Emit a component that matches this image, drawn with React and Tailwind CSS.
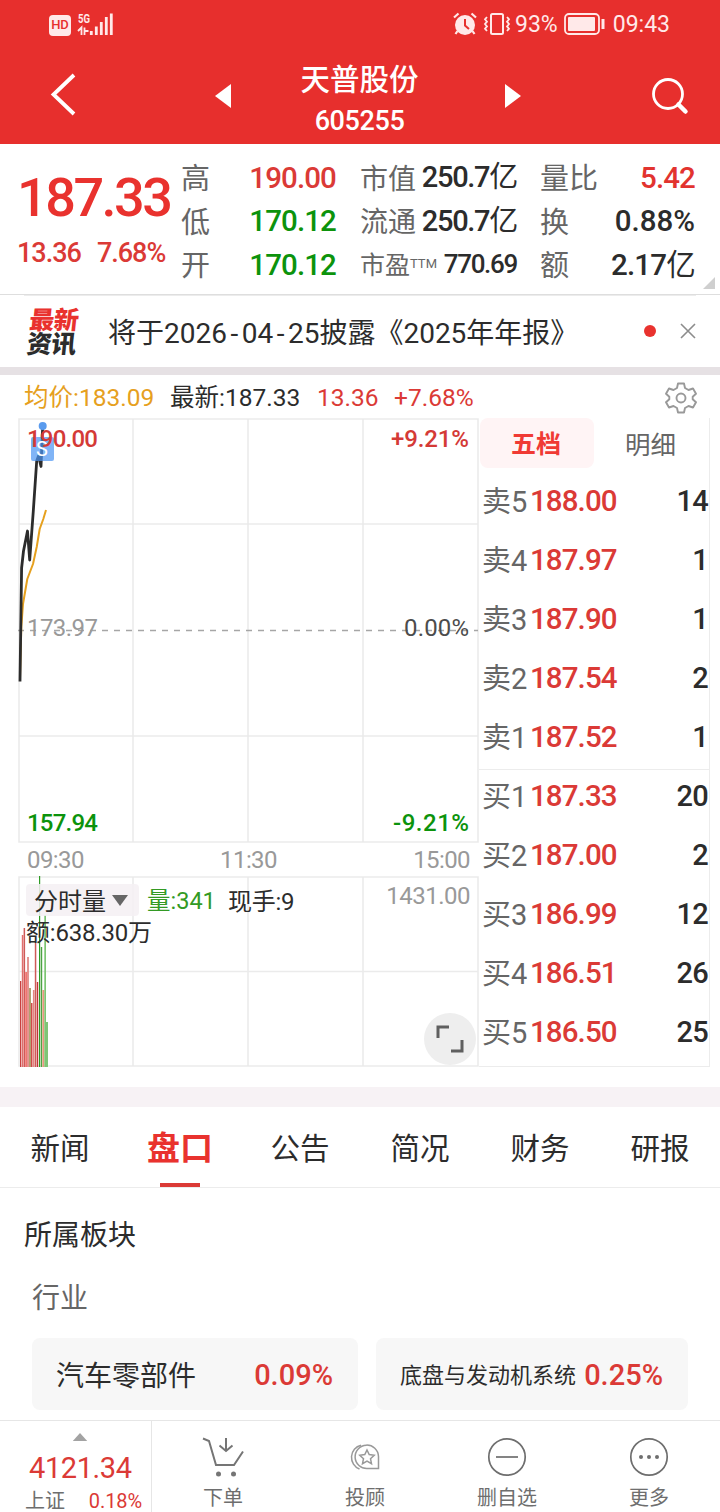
import React from "react";

const quoteLeft = [
  { label: "高", value: "190.00", color: "text-[#db3a36]" },
  { label: "低", value: "170.12", color: "text-[#0c930c]" },
  { label: "开", value: "170.12", color: "text-[#0c930c]" },
];

const quoteMiddle = [
  { label: "市值", value: "250.7", unit: "亿" },
  { label: "流通", value: "250.7", unit: "亿" },
];

const quoteRight = [
  { label: "量比", value: "5.42", unit: "", color: "text-[#e2332f] tracking-[-0.9px]" },
  { label: "换", value: "0.88%", unit: "", color: "text-[#2c2c2c]" },
  { label: "额", value: "2.17", unit: "亿", color: "text-[#2c2c2c] tracking-[-0.8px]" },
];

const sellOrders = [
  { name: "卖", level: 5, price: "188.00", count: 14 },
  { name: "卖", level: 4, price: "187.97", count: 1 },
  { name: "卖", level: 3, price: "187.90", count: 1 },
  { name: "卖", level: 2, price: "187.54", count: 2 },
  { name: "卖", level: 1, price: "187.52", count: 1 },
];

const buyOrders = [
  { name: "买", level: 1, price: "187.33", count: 20 },
  { name: "买", level: 2, price: "187.00", count: 2 },
  { name: "买", level: 3, price: "186.99", count: 12 },
  { name: "买", level: 4, price: "186.51", count: 26 },
  { name: "买", level: 5, price: "186.50", count: 25 },
];

const tabs = ["新闻", "盘口", "公告", "简况", "财务", "研报"];

// x, top, width, color
const volumeBars = [
  [2, 105, 1.3, "#c9403f"],
  [3.8, 59, 1.5, "#e06f6d"],
  [5.6, 52, 1.5, "#cf5a58"],
  [7.2, 96, 2, "#f07572"],
  [9.1, 81, 1.8, "#e28a87"],
  [11, 112, 2, "#b3a070"],
  [13, 127, 1.5, "#cf4a48"],
  [14.9, 114, 1.6, "#e48480"],
  [16.8, 67, 1.5, "#cf5a58"],
  [18.8, 106, 1.4, "#c03635"],
  [21, 0, 1.2, "#2e9a24"],
  [22.8, 71, 1.4, "#4da343"],
  [24.4, 114, 1.8, "#e8957e"],
  [26.3, 39, 1.7, "#7cc573"],
  [28, 146, 2, "#80c477"],
];

const StatusBar = () => (
  <div className="flex h-12 items-center pr-[50px] pl-[49px] text-[#ffe9e9]">
    <div className="mt-[2px] flex h-[21px] w-[22px] items-center justify-center rounded-[4px] bg-[#ffe9e9]">
      <span className="text-[13px] font-medium text-[#e72f2d]">HD</span>
    </div>
    <svg className="ml-[6px]" width="37" height="24" viewBox="0 0 37 24">
      <text x="1" y="10.500" fontSize="13" fontWeight="700" fill="#ffe9e9" textLength="12" lengthAdjust="spacingAndGlyphs">
        5G
      </text>
      <path d="M1 19 4.500 15.500V23M7.500 15.500V23M7.500 19h4" fill="none" stroke="#ffe9e9" strokeWidth="1.800" />
      <path d="M14.300 19v4M19.300 14.500v8.500M24.300 10v13M29.300 5v18M34.300 1.500V23" stroke="#ffe9e9" strokeWidth="2.800" />
    </svg>
    <div className="ml-auto flex items-center">
      <svg width="24" height="24" viewBox="0 0 24 24">
        <path d="M1 5.500 5.500 1.500M18.500 1.500 23 5.500M4.500 19 2.500 22M19.500 19l2 3" stroke="#ffe9e9" strokeWidth="2.200" />
        <circle cx="12" cy="13" r="10" fill="#ffe9e9" />
        <path d="M12 7v6.500l4 3.500" fill="none" stroke="#e72f2d" strokeWidth="2" />
      </svg>
      <svg className="ml-[6px]" width="28" height="24" viewBox="0 0 28 24">
        <rect x="8" y="2" width="12" height="20" rx="1.500" fill="none" stroke="#ffe9e9" strokeWidth="2" />
        <path d="M4 5 2 7.300l2 2.400-2 2.300 2 2.400-2 2.300 2 2.300M24 5l2 2.300-2 2.400 2 2.300-2 2.400 2 2.300-2 2.300" fill="none" stroke="#ffe9e9" strokeWidth="1.800" />
      </svg>
      <span className="mt-[2px] ml-[4px] text-[23px]">93%</span>
      <svg className="ml-[6px]" width="41" height="22" viewBox="0 0 41 22">
        <rect x="1" y="1" width="34" height="20" rx="4" fill="none" stroke="#ffe9e9" strokeWidth="1.800" />
        <rect x="4" y="4" width="27" height="14" rx="1" fill="#ffe9e9" />
        <path d="M39 6v10" stroke="#ffe9e9" strokeWidth="3" />
      </svg>
      <span className="mt-[2px] ml-[8px] text-[23px]">09:43</span>
    </div>
  </div>
);

const TitleBar = () => (
  <div className="flex h-24 items-center justify-between pr-[30px] pl-[49px] text-white">
    <svg className="mb-[4px]" width="28" height="44" viewBox="0 0 28 44">
      <path d="M25 3 4.500 22.500 25 42" fill="none" stroke="#fff" strokeWidth="3.800" />
    </svg>
    <div className="ml-[9px] flex items-center">
      <svg width="16" height="24" viewBox="0 0 17 24" preserveAspectRatio="none">
        <path d="M17 0v24L0 12z" fill="#fff" />
      </svg>
      <div className="flex w-[274px] flex-col items-center pt-[9px] pr-[17px]">
        <span className="h-[42px] text-[29.5px] leading-[42px] font-medium">天普股份</span>
        <span className="h-[42px] text-[27px] leading-[41px] font-medium tracking-[-0.4px]">605255</span>
      </div>
      <svg width="16" height="24" viewBox="0 0 17 24" preserveAspectRatio="none">
        <path d="M0 0v24l17-12z" fill="#fff" />
      </svg>
    </div>
    <svg width="40" height="40" viewBox="0 0 40 40">
      <circle cx="18" cy="18" r="14.500" fill="none" stroke="#fff" strokeWidth="2.800" />
      <path d="m28.500 28.500 7 7" stroke="#fff" strokeWidth="4.500" strokeLinecap="round" />
    </svg>
  </div>
);

const QuotePanel = () => (
  <div className="relative flex h-[151px] border-b border-[#dedede] pt-[12px]">
    <div className="w-[181px] pl-[17px] font-medium text-[#db3a36]">
      <p className="mt-[12px] h-[60px] text-[54px] leading-[60px] tracking-[-2.5px] text-[#e9322e]">187.33</p>
      <p className="mt-[9px] flex h-[32px] gap-[16px] text-[27px] leading-[32px] tracking-[-1px]">
        <span>13.36</span>
        <span>7.68%</span>
      </p>
    </div>
    <div className="w-[155px]">
      {quoteLeft.map((item) => (
        <div key={item.label} className="flex h-[43.5px] items-center justify-between">
          <span className="mt-[4px] text-[29px] text-[#666]">{item.label}</span>
          <span className={`text-[29.5px] font-medium tracking-[-0.9px] ${item.color}`}>{item.value}</span>
        </div>
      ))}
    </div>
    <div className="ml-[24px] w-[157px]">
      {quoteMiddle.map((item) => (
        <div key={item.label} className="flex h-[43.5px] items-center justify-between">
          <span className="mt-[4px] text-[28px] text-[#666]">{item.label}</span>
          <span className="text-[29px] font-medium tracking-[-1.3px] text-[#2c2c2c]">
            {item.value}
            <span className="font-normal">{item.unit}</span>
          </span>
        </div>
      ))}
      <div className="flex h-[43.5px] items-center justify-between">
        <span className="mt-[2px] text-[25px] whitespace-nowrap text-[#666]">
          市盈<sup className="top-[-0.5em] text-[13px]">TTM</sup>
        </span>
        <span className="text-[26px] font-medium tracking-[-1.3px] text-[#2c2c2c]">770.69</span>
      </div>
    </div>
    <div className="ml-[23px] w-[155px]">
      {quoteRight.map((item) => (
        <div key={item.label} className="flex h-[43.5px] items-center justify-between">
          <span className="mt-[4px] text-[29px] text-[#666]">{item.label}</span>
          <span className={`text-[29.5px] font-medium ${item.color}`}>
            {item.value}
            <span className="font-normal">{item.unit}</span>
          </span>
        </div>
      ))}
    </div>
    <svg className="absolute right-[5px] bottom-[5px]" width="12" height="12" viewBox="0 0 12 12">
      <path d="M12 0v12H0z" fill="#cfcfcf" />
    </svg>
  </div>
);

const NewsBar = () => (
  <div className="mx-6 flex h-[72px] items-center border-t border-[#ececec]">
    <div className="mt-[2px] ml-[4px] w-[56px] -skew-x-6 text-[25px] leading-[24px] font-black tracking-[-0.5px] text-[#2c2c2c]">
      <p className="text-[#e9322e]">最新</p>
      <p>资讯</p>
    </div>
    <p className="mt-[4px] ml-[24px] text-[28px] whitespace-nowrap text-[#2c2c2c]">
      将于2026<span className="px-[3.500px]">-</span>04<span className="px-[3.500px]">-</span>25披露《2025年年报》
    </p>
    <span className="mb-[2px] ml-auto size-[12px] rounded-full bg-[#e9322e]" />
    <svg className="mb-[2px] ml-[24px]" width="16" height="16" viewBox="0 0 16 16">
      <path d="m1 1 14 14M15 1 1 15" stroke="#8c8c8c" strokeWidth="1.600" />
    </svg>
  </div>
);

const ChartHeader = () => (
  <div className="flex h-[43px] items-center pt-[3px] pr-[24px] pl-[24px] text-[24.5px] whitespace-nowrap text-[#2c2c2c]">
    <span className="w-[146px] text-[#e6a01e]">均价:183.09</span>
    <span className="w-[147px]">最新:187.33</span>
    <span className="w-[77px] text-[#db3a36]">13.36</span>
    <span className="text-[#db3a36]">+7.68%</span>
    <svg className="mr-[-1px] ml-auto" width="32" height="32" viewBox="0 0 32 32" fill="none" stroke="#999" strokeWidth="1.900" strokeLinejoin="round">
      <path d="M13 1.500h6l1 4.500 3.500 2 4.500-1.500 3 5.200-3.300 3v2.600l3.300 3-3 5.200-4.500-1.500-3.500 2-1 4.500h-6l-1-4.500-3.500-2L4 25.500l-3-5.200 3.300-3v-2.600L1 11.700l3-5.200L8.500 8 12 6z" />
      <circle cx="16" cy="16" r="4.500" />
    </svg>
  </div>
);

const PriceChart = () => (
  <svg width="461" height="425" viewBox="0 0 461 425" className="block">
    <path d="M1 1h459v423H1zM115 1v423M230 1v423M345 1v423M1 106h459M1 318h459" fill="none" stroke="#ebebeb" strokeWidth="1.600" />
    <path d="M0 212.500h460" stroke="#a6a6a6" strokeWidth="1.700" strokeDasharray="6 6" />
    <path d="M2 260 3.300 209 5 186 9.300 161 15 146 18.700 129 21.700 111 25.300 101 28 92" fill="none" stroke="#e6a01e" strokeWidth="2" strokeLinejoin="round" />
    <path d="M2 263.500 3.600 150 5.500 133 9.500 113 11.700 142 15.300 93 18.700 43 20.500 38 23 48.500 24.700 8" fill="none" stroke="#2c2c2c" strokeWidth="2.800" strokeLinejoin="round" />
    <circle cx="24.700" cy="8" r="4" fill="#5a9bee" />
    <rect x="13" y="19" width="23" height="24" rx="2" fill="#4a94f2" fillOpacity=".7" />
    <text x="18" y="37.500" fontSize="20" fill="#fff">
      S
    </text>
    <g fontSize="24" fontWeight="500" lengthAdjust="spacingAndGlyphs">
      <text x="9" y="29" fill="#d43a36" textLength="71">190.00</text>
      <text x="373" y="29" fill="#d43a36" textLength="78">+9.21%</text>
      <text x="9" y="218" fill="#999" fontWeight="400" textLength="71">173.97</text>
      <text x="386" y="218" fill="#4c4c4c" fontWeight="400" textLength="65">0.00%</text>
      <text x="9" y="413" fill="#0c930c" textLength="71">157.94</text>
      <text x="375" y="413" fill="#0c930c" textLength="76">-9.21%</text>
    </g>
  </svg>
);

const VolumeChart = () => (
  <div className="relative h-[191px]">
    <svg width="461" height="191" viewBox="0 0 461 191" className="block">
      <path d="M1 1h459v189H1zM115 1v189M230 1v189M345 1v189M1 95.500h459" fill="none" stroke="#ebebeb" strokeWidth="1.600" />
      {volumeBars.map(([x, top, width, color]) => (
        <rect key={x} x={x} y={top} width={width} height={191 - top} fill={color} />
      ))}
    </svg>
    <div className="absolute top-[8px] right-[8px] left-[8px] flex h-[32px] items-center text-[24px] whitespace-nowrap text-[#2c2c2c]">
      <div className="flex h-full w-[113px] items-center rounded-[4px] bg-[#f4f0f3]/85 pl-[8px]">
        <span className="mt-[3px] text-[24px]">分时量</span>
        <svg className="ml-[6px]" width="16" height="11" viewBox="0 0 16 11">
          <path d="M0 0h16L8 11z" fill="#666" />
        </svg>
      </div>
      <span className="mt-[3px] ml-[8px] w-[81px] text-[23.5px] text-[#339a24]">量:341</span>
      <span className="mt-[3px] text-[24px] tracking-[-0.3px]">现手:9</span>
      <span className="mr-[1px] mb-[8px] ml-auto text-[24px] tracking-[-0.5px] text-[#999]">1431.00</span>
    </div>
    <p className="absolute top-[40px] left-[8px] text-[24px] leading-[34px] tracking-[-0.2px] text-[#2c2c2c]">额:638.30万</p>
    <div className="absolute right-[3px] bottom-[2px] flex size-[52px] items-center justify-center rounded-full bg-[#eeeeee]">
      <svg width="28" height="28" viewBox="0 0 28 28">
        <path d="M2 13V2h11M26 15v11H15" fill="none" stroke="#5f5f5f" strokeWidth="3" />
      </svg>
    </div>
  </div>
);

const OrderRow = ({ order }) => (
  <div className="flex h-[59px] items-center pr-[1px]">
    <span className="mt-[3px] w-[48px] text-[29px] text-[#666]">
      {order.name}
      {order.level}
    </span>
    <span className="text-[29.5px] font-medium tracking-[-0.9px] text-[#db3a36]">{order.price}</span>
    <span className="ml-auto text-[29px] font-medium tracking-[-0.7px] text-[#2c2c2c]">{order.count}</span>
  </div>
);

const OrderBook = () => (
  <div className="h-[649px] w-[231px] border-r border-b border-[#ececec]">
    <div className="flex h-[50px] items-center text-[25px]">
      <span className="ml-[1px] flex h-full w-[114px] items-center justify-center rounded-lg bg-[#fff4f5] pt-[4px] pr-[2px] font-bold text-[#f03a34]">
        五档
      </span>
      <span className="flex-1 pt-[4px] pr-[2px] text-center text-[25.5px] text-[#666]">明细</span>
    </div>
    <div className="h-[301px] pt-[4px] pl-[3px]">
      {sellOrders.map((order) => (
        <OrderRow key={order.level} order={order} />
      ))}
    </div>
    <div className="border-t border-[#ececec] pl-[3px]">
      <div className="-mt-[3px]">
        {buyOrders.map((order) => (
          <OrderRow key={order.level} order={order} />
        ))}
      </div>
    </div>
  </div>
);

const InfoTabs = () => (
  <div className="grid h-[81px] grid-cols-6 border-b border-[#ececec]">
    {tabs.map((tab) =>
      tab === "盘口" ? (
        <div key={tab} className="flex flex-col items-center text-[33px] font-bold text-[#e9322e]">
          <span className="h-[76px] leading-[84px]">{tab}</span>
          <span className="h-[4px] w-[40px] bg-[#db3a36]" />
        </div>
      ) : (
        <div key={tab} className="text-center text-[29.5px] leading-[85px] text-[#2c2c2c]">
          {tab}
        </div>
      )
    )}
  </div>
);

const SectorPanel = () => (
  <div className="h-[232px] text-[28px]">
    <p className="pt-[26px] pl-[24px] leading-[44px] text-[#2c2c2c]">所属板块</p>
    <p className="pt-[19px] pl-[32px] leading-[44px] text-[#666]">行业</p>
    <div className="mt-[17px] flex gap-[18px] pl-[32px] text-[#2c2c2c]">
      <div className="flex h-[72px] w-[326px] items-center justify-between rounded-lg bg-[#f7f7f7] pt-[3px] pr-[25px] pl-[24px]">
        <span className="pt-[3px]">汽车零部件</span>
        <span className="text-[29px] font-medium text-[#db3a36]">0.09%</span>
      </div>
      <div className="flex h-[72px] w-[312px] items-center justify-between rounded-lg bg-[#f7f7f7] pt-[3px] pr-[25px] pl-[24px]">
        <span className="text-[22px]">底盘与发动机系统</span>
        <span className="text-[29px] font-medium text-[#db3a36]">0.25%</span>
      </div>
    </div>
  </div>
);

const BottomBar = () => (
  <div className="flex h-[92px] border-t border-[#e6e6e6] text-[20px] text-[#6e6e6e]">
    <div className="flex w-[152px] flex-col border-r border-[#e6e6e6]">
      <svg className="mt-[12px] ml-[71px]" width="18" height="10" viewBox="0 0 18 10">
        <path d="M9 0l9 10H0z" fill="#a3a3a3" />
      </svg>
      <span className="mt-[7px] ml-[29px] h-[40px] text-[29px] leading-[40px] tracking-[-0.4px] text-[#db3a36]">4121.34</span>
      <div className="flex h-[24px] justify-between pr-[9px] pl-[25px] leading-[26px]">
        <span>上证</span>
        <span className="tracking-[-0.1px] text-[#db3a36]">0.18%</span>
      </div>
    </div>
    <div className="grid flex-1 grid-cols-4 text-center text-[20px] leading-[28px] [&_svg]:mx-auto">
      <div className="pt-[15px]">
        <svg width="42" height="42" viewBox="0 0 42 42" fill="none" stroke="#757575" strokeWidth="2">
          <path d="M1 2.500 7 5l7 24h18l9-13.500M24 2v13M17.500 9.500 24 15l6.500-5.500" />
          <circle cx="16.500" cy="38" r="2.500" fill="#757575" stroke="none" />
          <circle cx="31.500" cy="38" r="2.500" fill="#757575" stroke="none" />
        </svg>
        <p className="mt-[6px]">下单</p>
      </div>
      <div className="pt-[15px]">
        <svg width="42" height="42" viewBox="0 0 42 42" fill="none" stroke="#999" strokeWidth="1.500">
          <path d="M23.500 32.500H34.500V20.500A11.700 11.700 0 1 0 23.500 32.500z" />
          <path d="M17 9.200A12.500 12.500 0 0 0 15.500 33" />
          <path d="m23 14 2.200 4.600 5 .6-3.700 3.500 1 5-4.500-2.500-4.500 2.500 1-5-3.700-3.500 5-.6z" />
        </svg>
        <p className="mt-[6px]">投顾</p>
      </div>
      <div className="pt-[15px]">
        <svg width="42" height="42" viewBox="0 0 42 42" fill="none" stroke="#6e6e6e" strokeWidth="1.700">
          <circle cx="21" cy="21" r="18.200" />
          <path d="M10 21h22" />
        </svg>
        <p className="mt-[6px]">删自选</p>
      </div>
      <div className="pt-[15px]">
        <svg width="42" height="42" viewBox="0 0 42 42" fill="none" stroke="#6e6e6e" strokeWidth="1.700">
          <circle cx="21" cy="21" r="18.200" />
          <g fill="#6e6e6e" stroke="none">
            <circle cx="13" cy="21" r="2" />
            <circle cx="21" cy="21" r="2" />
            <circle cx="29" cy="21" r="2" />
          </g>
        </svg>
        <p className="mt-[6px]">更多</p>
      </div>
    </div>
  </div>
);

const App = () => {
  return (
    <div className="flex h-[1512px] w-[720px] flex-col overflow-hidden bg-white font-[Roboto,'Noto_Sans_CJK_SC',sans-serif]">
      <div className="bg-[#e72f2d]">
        <StatusBar />
        <TitleBar />
      </div>
      <QuotePanel />
      <NewsBar />
      <div className="h-[8px] bg-[#e6e1e4]" />
      <ChartHeader />
      <div className="flex h-[649px] pl-[18px]">
        <div className="w-[461px]">
          <PriceChart />
          <div className="flex h-[33px] items-center justify-between pr-[9px] pl-[9px] text-[24px] tracking-[-0.6px] text-[#999]">
            <span>09:30</span>
            <span>11:30</span>
            <span>15:00</span>
          </div>
          <VolumeChart />
        </div>
        <OrderBook />
      </div>
      <div className="mt-[20px] h-[20px] bg-[#f7f2f5]" />
      <InfoTabs />
      <SectorPanel />
      <BottomBar />
    </div>
  );
};

export default App;
